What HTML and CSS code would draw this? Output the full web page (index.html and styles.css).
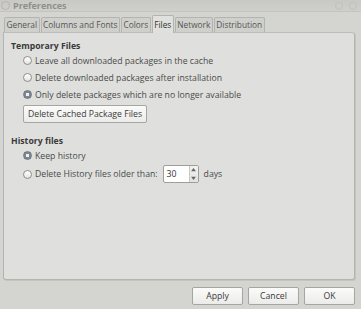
FILE: index.html
```html
<!DOCTYPE html>
<html lang="en">
<head>
    <meta charset="UTF-8">
    <title>Preferences</title>
    <link rel="stylesheet" href="styles.css">
</head>
<body>
    <div class="window">
        <div class="titlebar">
            <span class="app-icon"></span>
            <span class="title">Preferences</span>
            <span class="wm-buttons"><i></i><i></i></span>
        </div>

        <div class="tabs">
            <span class="tab">General</span>
            <span class="tab">Columns and Fonts</span>
            <span class="tab">Colors</span>
            <span class="tab active">Files</span>
            <span class="tab">Network</span>
            <span class="tab">Distribution</span>
        </div>

        <div class="panel">
            <h3>Temporary Files</h3>
            <div class="options">
                <label class="radio"><span class="dot"></span>Leave all downloaded packages in the cache</label>
                <label class="radio"><span class="dot"></span>Delete downloaded packages after installation</label>
                <label class="radio"><span class="dot checked"></span>Only delete packages which are no longer available</label>
                <button class="btn wide">Delete Cached Package Files</button>
            </div>

            <h3 class="second">History files</h3>
            <div class="options">
                <label class="radio"><span class="dot checked"></span>Keep history</label>
                <label class="radio spinrow"><span class="dot"></span>Delete History files older than:
                    <span class="spin">
                        <span class="spin-value">30</span>
                        <span class="spin-arrows">
                            <svg width="5" height="4" viewBox="0 0 6 5"><path d="M0 4 L3 0 L6 4 Z" fill="#666"/></svg>
                            <svg width="5" height="4" viewBox="0 0 6 5"><path d="M0 1 L3 5 L6 1 Z" fill="#666"/></svg>
                        </span>
                    </span>
                    days
                </label>
            </div>
        </div>

        <div class="actions">
            <button class="btn">Apply</button>
            <button class="btn">Cancel</button>
            <button class="btn">OK</button>
        </div>
    </div>
</body>
</html>
```

FILE: styles.css
```css
body {
    margin: 0;
    background: #d4d5d1;
    font-family: 'Open Sans', sans-serif;
    font-size: 8.7px;
    color: #4a4a4a;
}

.window {
    width: 361px;
    height: 309px;
    display: flex;
    flex-direction: column;
    overflow: hidden;
}

.titlebar {
    height: 11px;
    display: flex;
    align-items: center;
    background: linear-gradient(#c8c9c5, #cfd0cc);
    border-bottom: 1px solid #c3c4c0;
    padding: 0 4px 0 1px;
}

.app-icon {
    width: 7px;
    height: 7px;
    border-radius: 50%;
    border: 1px solid #b3a6a6;
    margin-right: 3px;
    opacity: 0.7;
}

.title {
    font-weight: bold;
    font-size: 9px;
    color: #8f8f8f;
    line-height: 11px;
}

.wm-buttons {
    margin-left: auto;
    display: flex;
    gap: 6px;
}

.wm-buttons i {
    width: 6px;
    height: 6px;
    border-radius: 50%;
    border: 1px solid #c0c1bd;
    background: #cccdc9;
}

/* tabs */
.tabs {
    display: flex;
    align-items: flex-end;
    padding: 5px 0 0 4px;
    height: 15px;
    position: relative;
    z-index: 1;
}

.tab {
    border: 1px solid #b3b4b0;
    border-bottom: none;
    background: #cfd0cc;
    padding: 0 1.5px;
    height: 14px;
    line-height: 14px;
    margin-right: 1px;
    border-radius: 2px 2px 0 0;
    color: #555;
    font-size: 8.3px;
}

.tab.active {
    background: #e0e1de;
    height: 17px;
    line-height: 18px;
    margin-bottom: -1px;
    color: #333;
}

.panel {
    margin: 0 6px 0 3px;
    height: 248px;
    box-sizing: border-box;
    background: #dfe0dd;
    border: 1px solid #b3b4b0;
    border-top-color: #bdbebb;
    border-radius: 0 3px 3px 3px;
    box-shadow: 1px 1px 0 #c4c5c1;
    padding: 7px 0 0 7px;
}

h3 {
    margin: 0;
    font-size: 8.7px;
    font-weight: bold;
    color: #3a3a3a;
    line-height: 12px;
}

h3.second {
    margin-top: 12px;
}

.options {
    display: flex;
    flex-direction: column;
    align-items: flex-start;
    padding-left: 12px;
}

.radio {
    display: flex;
    align-items: center;
    height: 17px;
}

.dot {
    width: 7px;
    height: 7px;
    border: 1px solid #8e8f8b;
    border-radius: 50%;
    background: linear-gradient(#ffffff, #e4e5e2);
    margin-right: 3px;
    box-sizing: content-box;
}

.dot.checked {
    border-color: #6e7580;
    background: radial-gradient(circle, #eef0f4 0 1.5px, #7c8694 2px);
}

.btn {
    font-family: 'Open Sans', sans-serif;
    font-size: 8.7px;
    color: #3a3a3a;
    background: linear-gradient(#fbfbfa, #ebebe9);
    border: 1px solid #a5a6a2;
    border-radius: 2px;
    height: 18px;
    padding: 0 4px;
    line-height: 15px;
}

.btn.wide {
    margin-top: 2px;
}

.spinrow {
    height: 20px;
}

.spin {
    display: flex;
    height: 18px;
    width: 36px;
    border: 1px solid #9e9f9b;
    border-radius: 2px;
    background: #fff;
    margin: 0 5px 0 5px;
    box-sizing: border-box;
}

.spin-value {
    flex: 1;
    padding-left: 3px;
    line-height: 16px;
    color: #333;
}

.spin-arrows {
    width: 8px;
    border-left: 1px solid #c5c6c2;
    background: linear-gradient(#f2f2f0, #e2e2e0);
    display: flex;
    flex-direction: column;
    justify-content: space-around;
    align-items: center;
}

.actions {
    display: flex;
    justify-content: flex-end;
    gap: 5px;
    padding: 7px 6px 0 0;
}

.actions .btn {
    width: 51px;
}
```
